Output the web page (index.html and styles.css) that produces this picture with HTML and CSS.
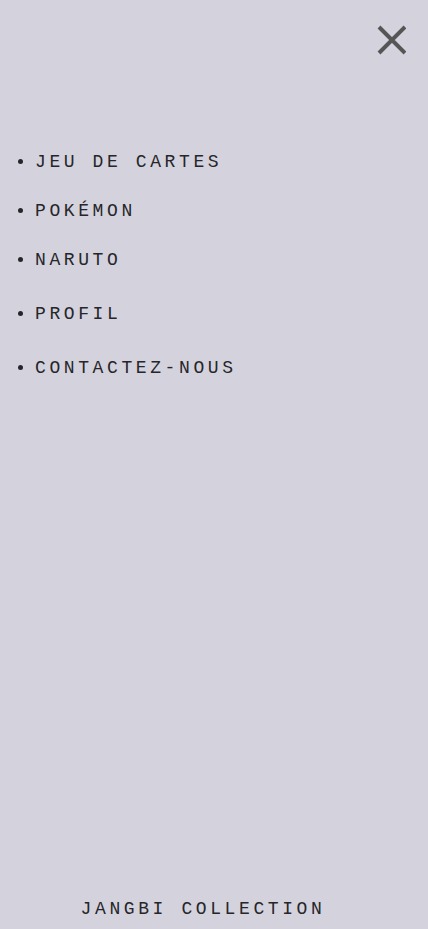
FILE: index.html
```html
<!DOCTYPE html>
<html lang="fr">
<head>
<meta charset="utf-8">
<link rel="stylesheet" href="styles.css">
</head>
<body>
<div class="menu">
  <header class="top">
    <button class="close" aria-label="Fermer">
      <svg width="32" height="32" viewBox="0 0 32 32"><path d="M5 4 L31 30 M31 4 L5 30" stroke="#555" stroke-width="4" stroke-linecap="butt" fill="none"/></svg>
    </button>
  </header>
  <ul class="nav">
    <li class="a">JEU DE CARTES</li>
    <li class="a">POKÉMON</li>
    <li class="a">NARUTO</li>
    <li class="b">PROFIL</li>
    <li class="b">CONTACTEZ-NOUS</li>
  </ul>
  <footer class="brand">JANGBI COLLECTION</footer>
</div>
</body>
</html>
```
FILE: styles.css
```css
html, body {
  margin: 0;
  padding: 0;
  background: #d4d3dd;
}
.menu {
  height: 929px;
  display: flex;
  flex-direction: column;
  font-family: "Liberation Mono", "DejaVu Sans Mono", monospace;
  color: #26262a;
}
.top {
  display: flex;
  justify-content: flex-end;
  padding: 23px 22px 0 0;
}
.close {
  background: none;
  border: 0;
  padding: 0;
  width: 32px;
  height: 32px;
  display: block;
}
.close svg { display: block; }
.nav {
  margin: 97px 0 0 0;
  padding: 0 0 0 35px;
  list-style: disc;
  font-size: 18px;
  letter-spacing: 3.6px;
  flex: 1;
}
.nav li { line-height: 21px; }
.nav li + li.a { margin-top: 28px; }
.nav li + li.b { margin-top: 33px; }
.brand {
  text-align: center;
  font-size: 18px;
  letter-spacing: 3.6px;
  padding: 0 22px 9px 0;
  line-height: 21px;
}
```
